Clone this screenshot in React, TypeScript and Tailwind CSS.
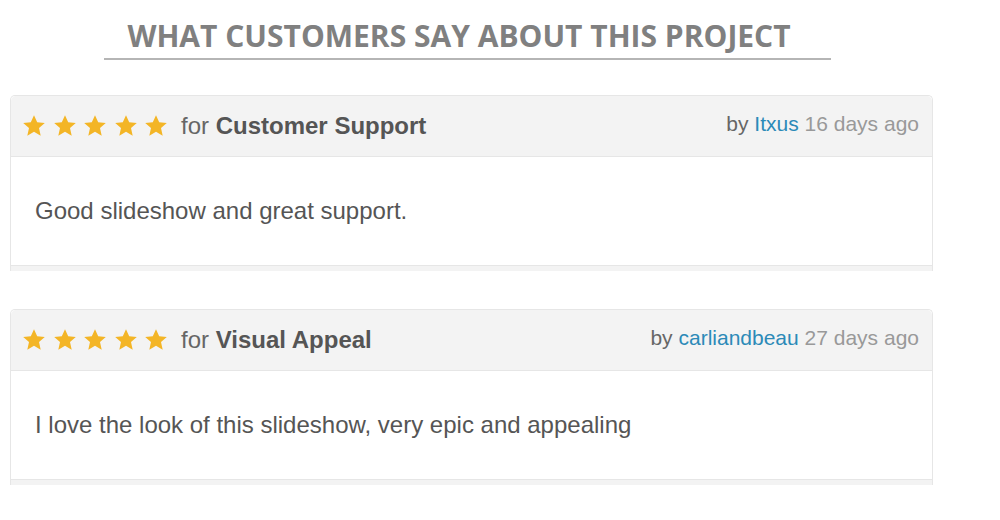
const stars = [0, 1, 2, 3, 4]

function Star() {
  return (
    <svg width="24" height="24" viewBox="0 0 24 24" className="block">
      <path
        d="M12 1.2l3.2 7.1 7.6.7-5.8 5.1 1.7 7.6L12 17.8l-6.7 3.9 1.7-7.6-5.8-5.1 7.6-.7z"
        fill="#f3b526"
      />
    </svg>
  )
}

type Review = {
  topic: string
  author: string
  when: string
  text: string
}

const reviews: Review[] = [
  { topic: 'Customer Support', author: 'Itxus', when: '16 days ago', text: 'Good slideshow and great support.' },
  { topic: 'Visual Appeal', author: 'carliandbeau', when: '27 days ago', text: 'I love the look of this slideshow, very epic and appealing' },
]

function ReviewCard({ r }: { r: Review }) {
  return (
    <div className="ml-[10px] w-[923px] rounded-t-[5px] border border-b-0 border-[#e6e6e6] bg-white">
      <div className="flex h-[60px] items-center justify-between rounded-t-[5px] bg-[#f3f3f3] pl-[11px] pr-[13px]">
        <div className="flex items-center">
          <div className="flex gap-[6.5px]">
            {stars.map((s) => (
              <Star key={s} />
            ))}
          </div>
          <span className="ml-[13px] text-[24px] text-[#666]">
            for <b className="font-bold text-[#555]">{r.topic}</b>
          </span>
        </div>
        <div className="mb-[4px] text-[21px] text-[#666]">
          by <span className="text-[#2b8ab8]">{r.author}</span> <span className="text-[#999]">{r.when}</span>
        </div>
      </div>
      <div className="flex h-[109px] items-center border-t border-[#e6e6e6] pl-[24px] text-[24px] text-[#555]">
        {r.text}
      </div>
      <div className="h-[6px] border-t border-[#e6e6e6] bg-[#f3f3f3]" />
    </div>
  )
}

export default function App() {
  return (
    <div className="h-[520px] w-[1000px] bg-white font-['Liberation_Sans',Arial,sans-serif]">
      <div className="pt-[17px]">
        <div className="ml-[104px] w-[727px] border-b-2 border-[#b5b5b5] pb-[4px] pr-[17px] text-center font-['Open_Sans',sans-serif] text-[30px] font-bold leading-[37px] text-[#808080]">
          WHAT CUSTOMERS SAY ABOUT THIS PROJECT
        </div>
      </div>
      <div className="mt-[35px] flex flex-col gap-[38px]">
        {reviews.map((r) => (
          <ReviewCard key={r.author} r={r} />
        ))}
      </div>
    </div>
  )
}
